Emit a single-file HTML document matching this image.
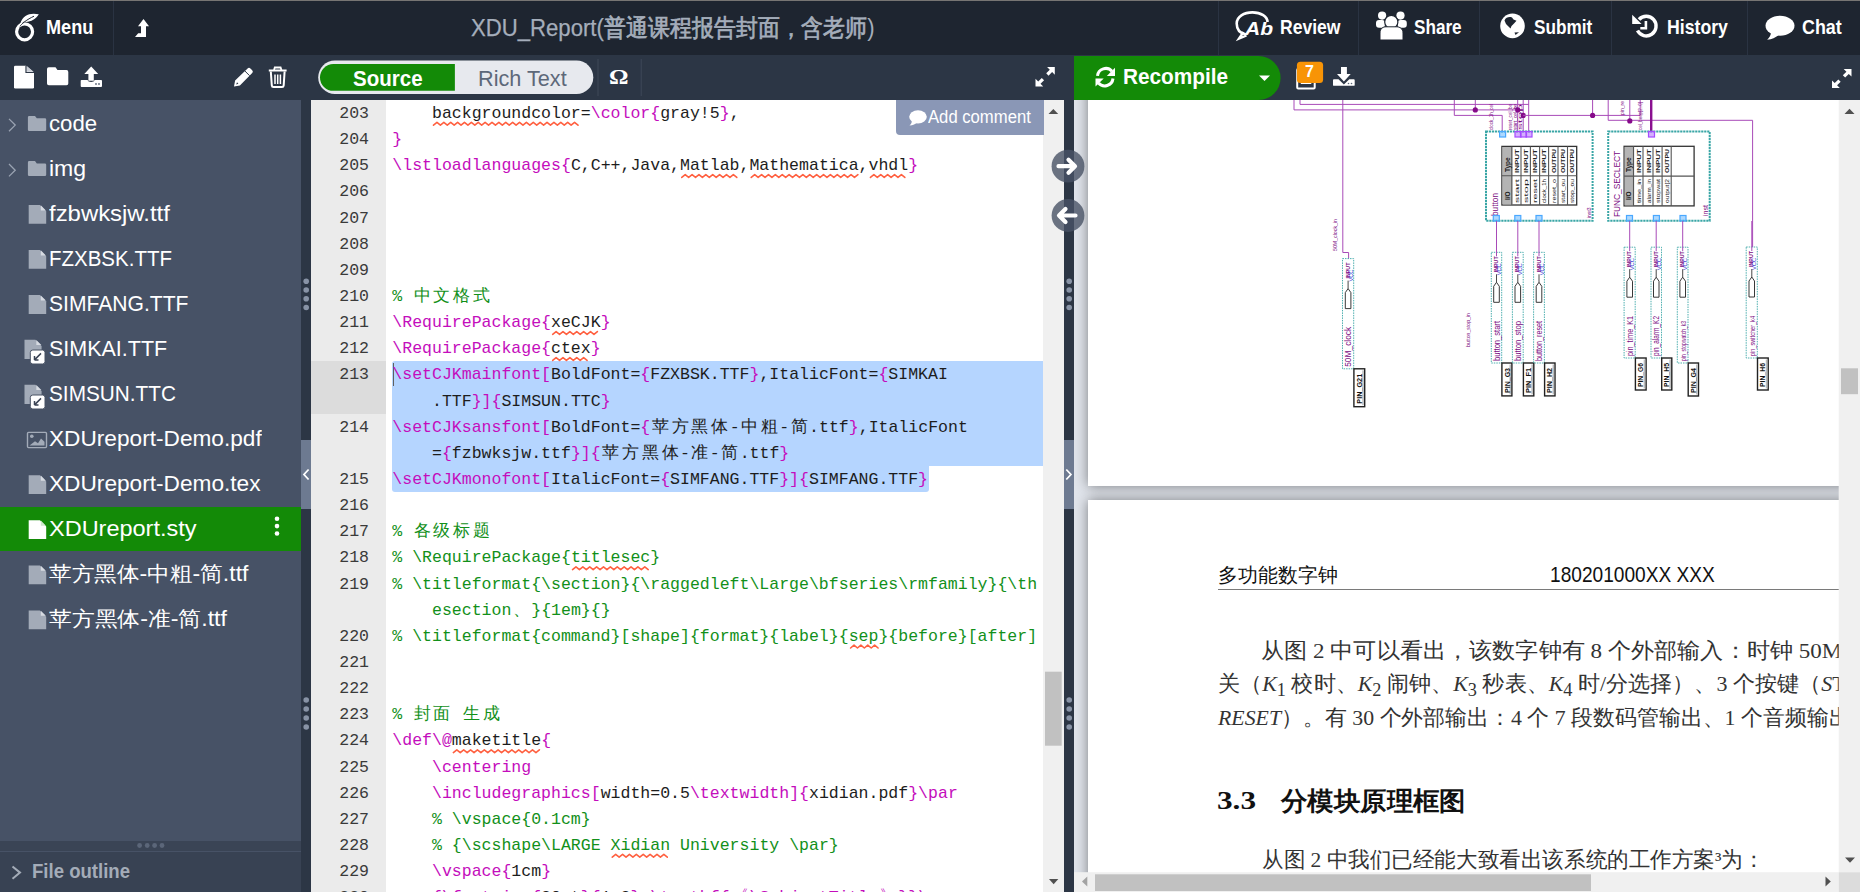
<!DOCTYPE html>
<html><head><meta charset='utf-8'><title>Overleaf</title><style>
*{box-sizing:border-box;margin:0;padding:0}
html,body{width:1860px;height:892px;overflow:hidden;background:#1e2530;font-family:"Liberation Sans",sans-serif}
.a{position:absolute}
.tx{position:absolute;white-space:pre;transform-origin:0 0}
.ov{position:absolute;left:0;top:0}
.cl{position:absolute;left:392.3px;height:26px;white-space:pre;font:16.55px/26px "Liberation Mono",monospace;color:#1d1d1d}
.cl b{font-weight:normal;color:#c40dbc}
.cl em{font-style:normal;color:#12901a}
.cl i{font-style:normal;display:inline-block;width:19.86px;text-align:center;line-height:26px;vertical-align:top}
.gn{position:absolute;left:311px;width:58px;text-align:right;height:26px;font:16.55px/26px "Liberation Mono",monospace;color:#3a3a3a}
</style></head><body>
<div class='a' style='left:0;top:0;width:1860px;height:55px;background:#1e2530;border-top:1px solid #777573'></div>
<div class='a' style='left:113px;top:1px;width:1px;height:54px;background:#2a3342'></div>
<div class='a' style='left:1218px;top:1px;width:1px;height:54px;background:#2a3342'></div>
<div class='a' style='left:1358px;top:1px;width:1px;height:54px;background:#2a3342'></div>
<div class='a' style='left:1479px;top:1px;width:1px;height:54px;background:#2a3342'></div>
<div class='a' style='left:1611px;top:1px;width:1px;height:54px;background:#2a3342'></div>
<div class='a' style='left:1747px;top:1px;width:1px;height:54px;background:#2a3342'></div>
<div class='a' style='left:0;top:55px;width:1860px;height:45px;background:#2c3645'></div>
<div class='a' style='left:0;top:100px;width:301px;height:741px;background:#475266'></div>
<div class='a' style='left:0;top:841px;width:301px;height:10px;background:#3a4455'></div>
<div class='a' style='left:0;top:851px;width:301px;height:41px;background:#384253;border-top:1px solid #475266'></div>
<div class='a' style='left:301px;top:100px;width:10px;height:792px;background:#2c3645'></div>
<div class='a' style='left:301px;top:440px;width:10px;height:69px;background:#6d7a91'></div>
<div class='a' style='left:1064px;top:100px;width:10px;height:792px;background:#2c3645'></div>
<div class='a' style='left:1064px;top:440px;width:10px;height:69px;background:#6d7a91'></div>
<div class='a' style='left:311px;top:100px;width:75px;height:792px;background:#ebebeb'></div>
<div class='a' style='left:386px;top:100px;width:657px;height:792px;background:#fff'></div>
<div class='a' style='left:1043px;top:100px;width:21px;height:792px;background:#f0f0f0'></div>
<div class='a' style='left:1074px;top:100px;width:786px;height:792px;background:#e0e4eb;overflow:hidden'><div class='a' style='left:14px;top:-600px;width:1000px;height:986px;background:#fff;box-shadow:0 0 12px rgba(0,0,0,.45)'></div><div class='a' style='left:14px;top:400px;width:1000px;height:1000px;background:#fff;box-shadow:0 0 12px rgba(0,0,0,.45)'></div></div>
<svg class='ov' width='1860' height='100' viewBox='0 0 1860 100'><circle cx='24.6' cy='31.8' r='8' fill='none' stroke='#fff' stroke-width='3.2'/><path d='M20.8 22.2 C23 15.5 30 12.2 38.8 14.3 C35.5 19.5 30.5 22.4 24.2 21.8 Z' fill='#fff'/><path d='M18.6 28 C21.5 23.5 27 19.5 34 16.2' fill='none' stroke='#1e2530' stroke-width='1'/><path d='M17.6 28.8 C19 25 21 23 22.5 21.5' fill='none' stroke='#fff' stroke-width='1.6'/><path d='M143.5 19 L149 26.2 L146 26.2 L146 37 L135 37 L138.2 33.2 L141 33.2 L141 26.2 L138 26.2 Z' fill='#fff'/><path d='M1246 34.5 C1238 33 1236.7 27 1236.7 23.5 C1236.7 16.5 1244 12.4 1252.5 12.4 C1261 12.4 1267.5 16.5 1267.5 22' fill='none' stroke='#fff' stroke-width='2.6'/><path d='M1243.5 32 L1239 38.6 L1246.5 35.5' fill='none' stroke='#fff' stroke-width='2.4'/><text x='1245' y='35.3' font-family='Liberation Sans' font-weight='bold' font-style='italic' font-size='19' fill='#fff' textLength='28' lengthAdjust='spacingAndGlyphs'>Ab</text><circle cx='1382.1' cy='15.6' r='4.1' fill='#fff'/><circle cx='1400.5' cy='15.6' r='4.1' fill='#fff'/><rect x='1376' y='19.9' width='9' height='7.8' rx='3' fill='#fff'/><rect x='1397.6' y='19.9' width='9.2' height='7.8' rx='3' fill='#fff'/><circle cx='1391.3' cy='21.9' r='6.6' fill='#fff' stroke='#1e2530' stroke-width='1.2'/><path d='M1380 40 L1380 33 C1380 28.5 1383 26.8 1386 26.8 L1396.5 26.8 C1399.5 26.8 1403 28.5 1403 33 L1403 40 Z' fill='#fff' stroke='#1e2530' stroke-width='1'/><circle cx='1512.5' cy='25.9' r='12.3' fill='#fff'/><path d='M1504.5 20.5 C1506 17 1509.5 16.5 1512 17.5 L1513.5 19.5 L1516.5 20.8 L1514 23.5 L1511.5 26 L1510.5 28.5 L1508.5 26.5 L1506 24 Z' fill='#1e2530'/><path d='M1514.5 32.5 L1519 32.3 L1515.5 35 Z' fill='#1e2530'/><path d='M1637.5 30.5 A9.8 9.8 0 1 0 1639 19.5' fill='none' stroke='#fff' stroke-width='3.4'/><path d='M1632.2 14.7 L1632.2 23.9 L1641.6 23.9 Z' fill='#fff'/><path d='M1645.9 21 L1645.9 28.2 L1640.3 28.2' fill='none' stroke='#fff' stroke-width='2.6'/><ellipse cx='1780' cy='25.7' rx='14.5' ry='10' fill='#fff'/><path d='M1771 32 C1771 35 1769.5 37.5 1767.2 39.8 C1772 39.3 1775.5 37.5 1778.5 35.2 Z' fill='#fff'/><path d='M14 67 Q14 65.7 15.3 65.7 L26 65.7 L34 72.5 L34 87.2 Q34 88.5 32.7 88.5 L15.3 88.5 Q14 88.5 14 87.2 Z' fill='#fff'/><path d='M26.8 65.9 L26.8 71.8 L33.6 71.8 Z' fill='#c9cdd5'/><path d='M26 65.7 L26 72.5 L34 72.5' fill='none' stroke='#2c3645' stroke-width='1.2'/><path d='M47 69 Q47 67.2 48.8 67.2 L55.5 67.2 L57.5 70.1 L66.5 70.1 Q68.3 70.1 68.3 71.9 L68.3 83.4 Q68.3 85.2 66.5 85.2 L48.8 85.2 Q47 85.2 47 83.4 Z' fill='#fff'/><path d='M91.2 66.6 L98.2 74 L93.8 74 L93.8 80.8 L88.4 80.8 L88.4 74 L84.3 74 Z' fill='#fff'/><path d='M80.7 80.8 Q80.7 79.9 81.6 79.9 L87.5 79.9 Q88 82 91.1 82 Q94.2 82 94.7 79.9 L101.1 79.9 Q102 79.9 102 80.8 L102 86.1 Q102 87 101.1 87 L81.6 87 Q80.7 87 80.7 86.1 Z' fill='#fff'/><circle cx='96' cy='84' r='0.9' fill='#5d6879'/><circle cx='99' cy='84' r='0.9' fill='#5d6879'/><path d='M234 86.5 L239.9 85.4 L252.2 73.1 Q253.6 71.7 252.2 70.3 L250.4 68.5 Q249 67.1 247.6 68.5 L235.1 80.6 Z' fill='#fff'/><path d='M249.6 75.7 L244.8 70.9' stroke='#2c3645' stroke-width='1'/><path d='M236.2 84.6 L237 82.3 L238.4 83.7 Z' fill='#2c3645'/><path d='M268.8 70.5 L286.6 70.5' stroke='#fff' stroke-width='2'/><path d='M274 70 L274.8 67.5 L280.6 67.5 L281.4 70' fill='none' stroke='#fff' stroke-width='1.8'/><path d='M270.8 71.5 L271.8 85.4 Q271.9 87 273.5 87 L282 87 Q283.6 87 283.7 85.4 L284.6 71.5' fill='none' stroke='#fff' stroke-width='2'/><path d='M275 74.5 L275 84 M277.7 74.5 L277.7 84 M280.4 74.5 L280.4 84' stroke='#fff' stroke-width='1.5'/><rect x='318.2' y='60.6' width='275.1' height='33.4' rx='16.7' fill='#e7e9ee'/><path d='M333.4 64 L454.9 64 L454.9 90.8 L333.4 90.8 A13.4 13.4 0 0 1 333.4 64 Z' fill='#138a07'/><rect x='597.5' y='59' width='1' height='37' fill='#3e4859'/><rect x='640.7' y='59' width='1' height='37' fill='#3e4859'/><text x='609' y='84.2' font-family='Liberation Serif' font-weight='bold' font-size='22' fill='#fff' textLength='19.5' lengthAdjust='spacingAndGlyphs'>Ω</text><g transform='translate(1035.5 67.0) scale(0.965 0.980)'><path d='M12 0 L20 0 L20 8 L17.2 5.2 L13.5 8.9 L11.1 6.5 L14.8 2.8 Z' fill='#fff'/><path d='M8 20 L0 20 L0 12 L2.8 14.8 L6.5 11.1 L8.9 13.5 L5.2 17.2 Z' fill='#fff'/></g><g transform='translate(1832.0 69.0) scale(0.975 0.950)'><path d='M12 0 L20 0 L20 8 L17.2 5.2 L13.5 8.9 L11.1 6.5 L14.8 2.8 Z' fill='#fff'/><path d='M8 20 L0 20 L0 12 L2.8 14.8 L6.5 11.1 L8.9 13.5 L5.2 17.2 Z' fill='#fff'/></g><path d='M1074 56 L1258.6 56 A22 22 0 0 1 1258.6 100 L1074 100 Z' fill='#138a07'/><path d='M1097.5 75.8 A8.3 8.3 0 0 1 1112 71.3' fill='none' stroke='#fff' stroke-width='3'/><path d='M1115 67.8 L1115 76 L1106.8 76 Z' fill='#fff'/><path d='M1113 78.5 A8.3 8.3 0 0 1 1098.5 83' fill='none' stroke='#fff' stroke-width='3'/><path d='M1095.5 86.6 L1095.5 78.4 L1103.7 78.4 Z' fill='#fff'/><path d='M1259 75.5 L1270 75.5 L1264.5 81 Z' fill='#fff'/><rect x='1297.2' y='69' width='17.5' height='19.4' rx='1' fill='none' stroke='#fff' stroke-width='2'/><rect x='1300.8' y='82' width='10.5' height='2' fill='#fff'/><rect x='1296.9' y='61.8' width='26.2' height='21.1' rx='3.5' fill='#f89406'/><text x='1305' y='77' font-family='Liberation Sans' font-weight='bold' font-size='16' fill='#fff'>7</text><path d='M1341 67 L1346.9 67 L1346.9 74 L1350.7 74 L1343.9 81.6 L1337 74 L1341 74 Z' fill='#fff'/><path d='M1333 80.2 Q1333 79.3 1333.9 79.3 L1338.5 79.3 L1343.9 84.5 L1349.3 79.3 L1353.8 79.3 Q1354.7 79.3 1354.7 80.2 L1354.7 84.9 Q1354.7 85.8 1353.8 85.8 L1333.9 85.8 Q1333 85.8 1333 84.9 Z' fill='#fff'/><circle cx='1348.5' cy='83.5' r='0.8' fill='#5d6879'/><circle cx='1351.5' cy='83.5' r='0.8' fill='#5d6879'/></svg>
<span class='tx' style='left:46.41px;top:17.02px;font:bold 20.60px/1 "Liberation Sans",sans-serif;color:#fff;transform:scaleX(0.8790);'>Menu</span>
<span class='tx' style='left:470.97px;top:16.02px;font:normal 24.20px/1 "Liberation Sans",sans-serif;color:#a5aebb;transform:scaleX(0.9150);'><span style='-webkit-text-stroke:0.25px #a5aebb'>XDU_Report(</span><span style='-webkit-text-stroke:0.7px #a5aebb'>普通课程报告封面，含老师</span>)</span>
<span class='tx' style='left:1279.55px;top:18.02px;font:bold 19.70px/1 "Liberation Sans",sans-serif;color:#fff;transform:scaleX(0.8917);'>Review</span>
<span class='tx' style='left:1413.77px;top:18.02px;font:bold 19.70px/1 "Liberation Sans",sans-serif;color:#fff;transform:scaleX(0.8710);'>Share</span>
<span class='tx' style='left:1534.37px;top:18.02px;font:bold 19.70px/1 "Liberation Sans",sans-serif;color:#fff;transform:scaleX(0.8733);'>Submit</span>
<span class='tx' style='left:1666.94px;top:18.02px;font:bold 19.70px/1 "Liberation Sans",sans-serif;color:#fff;transform:scaleX(0.8980);'>History</span>
<span class='tx' style='left:1801.93px;top:18.02px;font:bold 19.70px/1 "Liberation Sans",sans-serif;color:#fff;transform:scaleX(0.9085);'>Chat</span>
<span class='tx' style='left:352.67px;top:68.02px;font:bold 22.30px/1 "Liberation Sans",sans-serif;color:#fff;transform:scaleX(0.9202);'>Source</span>
<span class='tx' style='left:478.40px;top:68.02px;font:normal 22.30px/1 "Liberation Sans",sans-serif;color:#5d6879;transform:scaleX(0.9716);'>Rich Text</span>
<span class='tx' style='left:1123.05px;top:66.02px;font:bold 22.50px/1 "Liberation Sans",sans-serif;color:#fff;transform:scaleX(0.9235);'>Recompile</span>
<span class='tx' style='left:48.67px;top:114.02px;font:normal 21.40px/1 "Liberation Sans",sans-serif;color:#fff;transform:scaleX(1.0383);'>code</span>
<span class='tx' style='left:48.62px;top:159.02px;font:normal 21.40px/1 "Liberation Sans",sans-serif;color:#fff;transform:scaleX(1.0783);'>img</span>
<span class='tx' style='left:48.57px;top:204.02px;font:normal 21.40px/1 "Liberation Sans",sans-serif;color:#fff;transform:scaleX(1.1174);'>fzbwksjw.ttf</span>
<span class='tx' style='left:48.77px;top:249.02px;font:normal 21.40px/1 "Liberation Sans",sans-serif;color:#fff;transform:scaleX(0.9579);'>FZXBSK.TTF</span>
<span class='tx' style='left:48.73px;top:294.02px;font:normal 21.40px/1 "Liberation Sans",sans-serif;color:#fff;transform:scaleX(0.9866);'>SIMFANG.TTF</span>
<span class='tx' style='left:48.71px;top:339.02px;font:normal 21.40px/1 "Liberation Sans",sans-serif;color:#fff;transform:scaleX(1.0044);'>SIMKAI.TTF</span>
<span class='tx' style='left:48.75px;top:384.02px;font:normal 21.40px/1 "Liberation Sans",sans-serif;color:#fff;transform:scaleX(0.9715);'>SIMSUN.TTC</span>
<span class='tx' style='left:48.64px;top:429.02px;font:normal 21.40px/1 "Liberation Sans",sans-serif;color:#fff;transform:scaleX(1.0588);'>XDUreport-Demo.pdf</span>
<span class='tx' style='left:48.64px;top:474.02px;font:normal 21.40px/1 "Liberation Sans",sans-serif;color:#fff;transform:scaleX(1.0592);'>XDUreport-Demo.tex</span>
<div class='a' style='left:0;top:506.80px;width:301px;height:44px;background:#138a07'></div>
<span class='tx' style='left:48.59px;top:519.02px;font:normal 21.40px/1 "Liberation Sans",sans-serif;color:#fff;transform:scaleX(1.0982);'>XDUreport.sty</span>
<span class='tx' style='left:48.62px;top:564.02px;font:normal 21.40px/1 "Liberation Sans",sans-serif;color:#fff;transform:scaleX(1.0780);'>苹方黑体-中粗-简.ttf</span>
<span class='tx' style='left:48.61px;top:609.02px;font:normal 21.40px/1 "Liberation Sans",sans-serif;color:#fff;transform:scaleX(1.0851);'>苹方黑体-准-简.ttf</span>
<svg class='ov' width='1860' height='892'><path d='M9 118.9 L15.2 125.1 L9 131.3' fill='none' stroke='#9aa3b2' stroke-width='1.3'/><path d='M27.9 117.3 Q27.9 116.0 29.2 116.0 L35 116.0 L36.8 118.3 L44.9 118.3 Q46.2 118.3 46.2 119.6 L46.2 129.8 Q46.2 131.0 44.9 131.0 L29.2 131.0 Q27.9 131.0 27.9 129.8 Z' fill='#a3abb8'/><path d='M9 164.0 L15.2 170.2 L9 176.4' fill='none' stroke='#9aa3b2' stroke-width='1.3'/><path d='M27.9 162.4 Q27.9 161.0 29.2 161.0 L35 161.0 L36.8 163.4 L44.9 163.4 Q46.2 163.4 46.2 164.7 L46.2 174.8 Q46.2 176.0 44.9 176.0 L29.2 176.0 Q27.9 176.0 27.9 174.8 Z' fill='#a3abb8'/><path d='M28.7 205.0 L39.9 205.0 L46.2 211.3 L46.2 223.8 L28.7 223.8 Z' fill='#a3abb8'/><path d='M40.8 205.3 L45.9 210.4 L40.8 210.4 Z' fill='#d6dae1'/><path d='M28.7 250.0 L39.9 250.0 L46.2 256.3 L46.2 268.8 L28.7 268.8 Z' fill='#a3abb8'/><path d='M40.8 250.3 L45.9 255.4 L40.8 255.4 Z' fill='#d6dae1'/><path d='M28.7 295.1 L39.9 295.1 L46.2 301.4 L46.2 313.9 L28.7 313.9 Z' fill='#a3abb8'/><path d='M40.8 295.4 L45.9 300.5 L40.8 300.5 Z' fill='#d6dae1'/><path d='M24.5 339.7 L35.4 339.7 L41.6 345.9 L41.6 359.0 L24.5 359.0 Z' fill='#a3abb8'/><path d='M36.3 340.0 L41.3 345.0 L36.3 345.0 Z' fill='#d6dae1'/><rect x='30.3' y='350.0' width='14.7' height='14' rx='2.5' fill='#fff' stroke='#495365' stroke-width='1'/><path d='M41 353.4 L34.5 359.9 M34.5 359.9 L34.5 355.9 M34.5 359.9 L38.5 359.9' fill='none' stroke='#3b4455' stroke-width='1.5'/><path d='M24.5 384.8 L35.4 384.8 L41.6 390.9 L41.6 404.0 L24.5 404.0 Z' fill='#a3abb8'/><path d='M36.3 385.1 L41.3 390.0 L36.3 390.0 Z' fill='#d6dae1'/><rect x='30.3' y='395.0' width='14.7' height='14' rx='2.5' fill='#fff' stroke='#495365' stroke-width='1'/><path d='M41 398.4 L34.5 404.9 M34.5 404.9 L34.5 400.9 M34.5 404.9 L38.5 404.9' fill='none' stroke='#3b4455' stroke-width='1.5'/><rect x='27.5' y='432.4' width='19' height='15.2' rx='1' fill='none' stroke='#a3abb8' stroke-width='1.4'/><circle cx='31.8' cy='436.3' r='1.8' fill='#a3abb8'/><path d='M29.5 445.5 L35 441.2 L38 443.2 L41 438.5 L44.5 441.7 L44.5 445.5 L29.5 445.5 Z' fill='#a3abb8'/><path d='M28.7 475.3 L39.9 475.3 L46.2 481.6 L46.2 494.1 L28.7 494.1 Z' fill='#a3abb8'/><path d='M40.8 475.6 L45.9 480.7 L40.8 480.7 Z' fill='#d6dae1'/><path d='M28.7 520.3 L39.9 520.3 L46.2 526.6 L46.2 539.1 L28.7 539.1 Z' fill='#fff'/><path d='M40.8 520.6 L45.9 525.7 L40.8 525.7 Z' fill='#cfe8cc'/><circle cx='277' cy='518.7' r='2.3' fill='#fff'/><circle cx='277' cy='526.1' r='2.3' fill='#fff'/><circle cx='277' cy='533.5' r='2.3' fill='#fff'/><path d='M28.7 565.4 L39.9 565.4 L46.2 571.7 L46.2 584.2 L28.7 584.2 Z' fill='#a3abb8'/><path d='M40.8 565.7 L45.9 570.8 L40.8 570.8 Z' fill='#d6dae1'/><path d='M28.7 610.4 L39.9 610.4 L46.2 616.7 L46.2 629.2 L28.7 629.2 Z' fill='#a3abb8'/><path d='M40.8 610.7 L45.9 615.8 L40.8 615.8 Z' fill='#d6dae1'/><circle cx='139.6' cy='845.5' r='2.4' fill='#5b6679'/><circle cx='147.2' cy='845.5' r='2.4' fill='#5b6679'/><circle cx='154.6' cy='845.5' r='2.4' fill='#5b6679'/><circle cx='162.0' cy='845.5' r='2.4' fill='#5b6679'/><path d='M12.5 866.5 L20 872.6 L12.5 878.7' fill='none' stroke='#a4acb8' stroke-width='2'/><circle cx='306.2' cy='281.3' r='2.8' fill='#8893a6'/><circle cx='306.2' cy='290.0' r='2.8' fill='#8893a6'/><circle cx='306.2' cy='298.8' r='2.8' fill='#8893a6'/><circle cx='306.2' cy='307.5' r='2.8' fill='#8893a6'/><circle cx='306.2' cy='700.0' r='2.8' fill='#8893a6'/><circle cx='306.2' cy='709.0' r='2.8' fill='#8893a6'/><circle cx='306.2' cy='718.0' r='2.8' fill='#8893a6'/><circle cx='306.2' cy='727.0' r='2.8' fill='#8893a6'/><circle cx='1069.2' cy='281.3' r='2.8' fill='#8893a6'/><circle cx='1069.2' cy='290.0' r='2.8' fill='#8893a6'/><circle cx='1069.2' cy='298.8' r='2.8' fill='#8893a6'/><circle cx='1069.2' cy='307.5' r='2.8' fill='#8893a6'/><circle cx='1069.2' cy='700.0' r='2.8' fill='#8893a6'/><circle cx='1069.2' cy='709.0' r='2.8' fill='#8893a6'/><circle cx='1069.2' cy='718.0' r='2.8' fill='#8893a6'/><circle cx='1069.2' cy='727.0' r='2.8' fill='#8893a6'/><path d='M308.6 469.5 L304 474.5 L308.6 479.5' fill='none' stroke='#fff' stroke-width='1.8'/><path d='M1066.3 469.5 L1070.9 474.5 L1066.3 479.5' fill='none' stroke='#fff' stroke-width='1.8'/></svg>
<span class='tx' style='left:32.09px;top:861.02px;font:bold 20.00px/1 "Liberation Sans",sans-serif;color:#a4acb8;transform:scaleX(0.9286);'>File outline</span>
<div class='a' style='left:311px;top:361.4px;width:75px;height:52.28px;background:#dcdcdc'></div>
<div class='a' style='left:392px;top:361.4px;width:651px;height:104.56px;background:#b5d5ff;border-radius:3px 0 0 0'></div>
<div class='a' style='left:392px;top:466.0px;width:537px;height:26.14px;background:#b5d5ff;border-radius:0 0 3px 3px'></div>
<div class='a' style='left:392.5px;top:362.9px;width:1.2px;height:23px;background:#606060'></div>
<div class='gn' style='top:101.00px'>203</div>
<div class='gn' style='top:127.14px'>204</div>
<div class='gn' style='top:153.28px'>205</div>
<div class='gn' style='top:179.42px'>206</div>
<div class='gn' style='top:205.56px'>207</div>
<div class='gn' style='top:231.70px'>208</div>
<div class='gn' style='top:257.84px'>209</div>
<div class='gn' style='top:283.98px'>210</div>
<div class='gn' style='top:310.12px'>211</div>
<div class='gn' style='top:336.26px'>212</div>
<div class='gn' style='top:362.40px'>213</div>
<div class='gn' style='top:414.68px'>214</div>
<div class='gn' style='top:466.96px'>215</div>
<div class='gn' style='top:493.10px'>216</div>
<div class='gn' style='top:519.24px'>217</div>
<div class='gn' style='top:545.38px'>218</div>
<div class='gn' style='top:571.52px'>219</div>
<div class='gn' style='top:623.80px'>220</div>
<div class='gn' style='top:649.94px'>221</div>
<div class='gn' style='top:676.08px'>222</div>
<div class='gn' style='top:702.22px'>223</div>
<div class='gn' style='top:728.36px'>224</div>
<div class='gn' style='top:754.50px'>225</div>
<div class='gn' style='top:780.64px'>226</div>
<div class='gn' style='top:806.78px'>227</div>
<div class='gn' style='top:832.92px'>228</div>
<div class='gn' style='top:859.06px'>229</div>
<div class='gn' style='top:885.20px'>230</div>
<div class='cl' style='top:101.00px'>    backgroundcolor=<b>\color{</b>gray!5<b>}</b>,</div>
<div class='cl' style='top:127.14px'><b>}</b></div>
<div class='cl' style='top:153.28px'><b>\lstloadlanguages{</b>C,C++,Java,Matlab,Mathematica,vhdl<b>}</b></div>
<div class='cl' style='top:283.98px'><em>% <i>中</i><i>文</i><i>格</i><i>式</i></em></div>
<div class='cl' style='top:310.12px'><b>\RequirePackage{</b>xeCJK<b>}</b></div>
<div class='cl' style='top:336.26px'><b>\RequirePackage{</b>ctex<b>}</b></div>
<div class='cl' style='top:362.40px'><b>\setCJKmainfont[</b>BoldFont=<b>{</b>FZXBSK.TTF<b>}</b>,ItalicFont=<b>{</b>SIMKAI</div>
<div class='cl' style='top:388.54px'>    .TTF<b>}]{</b>SIMSUN.TTC<b>}</b></div>
<div class='cl' style='top:414.68px'><b>\setCJKsansfont[</b>BoldFont=<b>{</b><i>苹</i><i>方</i><i>黑</i><i>体</i>-<i>中</i><i>粗</i>-<i>简</i>.ttf<b>}</b>,ItalicFont</div>
<div class='cl' style='top:440.82px'>    =<b>{</b>fzbwksjw.ttf<b>}]{</b><i>苹</i><i>方</i><i>黑</i><i>体</i>-<i>准</i>-<i>简</i>.ttf<b>}</b></div>
<div class='cl' style='top:466.96px'><b>\setCJKmonofont[</b>ItalicFont=<b>{</b>SIMFANG.TTF<b>}]{</b>SIMFANG.TTF<b>}</b></div>
<div class='cl' style='top:519.24px'><em>% <i>各</i><i>级</i><i>标</i><i>题</i></em></div>
<div class='cl' style='top:545.38px'><em>% \RequirePackage{</em><em>titlesec</em><em>}</em></div>
<div class='cl' style='top:571.52px'><em>% \titleformat{\section}{\raggedleft\Large\bfseries\rmfamily}{\th</em></div>
<div class='cl' style='top:597.66px'>    <em>esection<i>、</i>}{1em}{}</em></div>
<div class='cl' style='top:623.80px'><em>% \titleformat{command}[shape]{format}{label}{</em><em>sep</em><em>}{before}[after]</em></div>
<div class='cl' style='top:702.22px'><em>% <i>封</i><i>面</i> <i>生</i><i>成</i></em></div>
<div class='cl' style='top:728.36px'><b>\def\@</b>maketitle<b>{</b></div>
<div class='cl' style='top:754.50px'>    <b>\centering</b></div>
<div class='cl' style='top:780.64px'>    <b>\includegraphics[</b>width=0.5<b>\textwidth]{</b>xidian.pdf<b>}\par</b></div>
<div class='cl' style='top:806.78px'>    <em>% \vspace{0.1cm}</em></div>
<div class='cl' style='top:832.92px'>    <em>% {\scshape\LARGE </em><em>Xidian</em><em> University \par}</em></div>
<div class='cl' style='top:859.06px'>    <b>\vspace{</b>1cm<b>}</b></div>
<div class='cl' style='top:885.20px'>    <b>{\fontsize{</b>30pt<b>}{</b>1.2<b>} \textbf{<i>《</i>\SubjectTitle<i>》</i>}}\par</b></div>
<svg class='ov' width='1860' height='892'><path d='M433.52 125.20 L436.96 122.40 L440.40 125.20 L443.84 122.40 L447.28 125.20 L450.72 122.40 L454.16 125.20 L457.60 122.40 L461.04 125.20 L464.48 122.40 L467.92 125.20 L471.36 122.40 L474.80 125.20 L478.24 122.40 L481.68 125.20 L485.12 122.40 L488.56 125.20 L492.00 122.40 L495.44 125.20 L498.88 122.40 L502.32 125.20 L505.76 122.40 L509.20 125.20 L512.64 122.40 L516.08 125.20 L519.52 122.40 L522.96 125.20 L526.40 122.40 L529.84 125.20 L533.28 122.40 L536.72 125.20 L540.16 122.40 L543.60 125.20 L547.04 122.40 L550.48 125.20 L553.92 122.40 L557.36 125.20 L560.80 122.40 L564.24 125.20 L567.68 122.40 L571.12 125.20 L574.56 122.40 L578.00 125.20' fill='none' stroke='#ff6040' stroke-width='1.6' stroke-linejoin='round' stroke-linecap='round'/><path d='M681.77 177.48 L685.21 174.68 L688.65 177.48 L692.09 174.68 L695.53 177.48 L698.97 174.68 L702.41 177.48 L705.85 174.68 L709.29 177.48 L712.73 174.68 L716.17 177.48 L719.61 174.68 L723.05 177.48 L726.49 174.68 L729.93 177.48 L733.37 174.68 L736.81 177.48' fill='none' stroke='#ff6040' stroke-width='1.6' stroke-linejoin='round' stroke-linecap='round'/><path d='M751.28 177.48 L754.72 174.68 L758.16 177.48 L761.60 174.68 L765.04 177.48 L768.48 174.68 L771.92 177.48 L775.36 174.68 L778.80 177.48 L782.24 174.68 L785.68 177.48 L789.12 174.68 L792.56 177.48 L796.00 174.68 L799.44 177.48 L802.88 174.68 L806.32 177.48 L809.76 174.68 L813.20 177.48 L816.64 174.68 L820.08 177.48 L823.52 174.68 L826.96 177.48 L830.40 174.68 L833.84 177.48 L837.28 174.68 L840.72 177.48 L844.16 174.68 L847.60 177.48 L851.04 174.68 L854.48 177.48 L857.92 174.68' fill='none' stroke='#ff6040' stroke-width='1.6' stroke-linejoin='round' stroke-linecap='round'/><path d='M870.44 177.48 L873.88 174.68 L877.32 177.48 L880.76 174.68 L884.20 177.48 L887.64 174.68 L891.08 177.48 L894.52 174.68 L897.96 177.48 L901.40 174.68 L904.84 177.48' fill='none' stroke='#ff6040' stroke-width='1.6' stroke-linejoin='round' stroke-linecap='round'/><path d='M552.68 334.32 L556.12 331.52 L559.56 334.32 L563.00 331.52 L566.44 334.32 L569.88 331.52 L573.32 334.32 L576.76 331.52 L580.20 334.32 L583.64 331.52 L587.08 334.32 L590.52 331.52 L593.96 334.32 L597.40 331.52' fill='none' stroke='#ff6040' stroke-width='1.6' stroke-linejoin='round' stroke-linecap='round'/><path d='M552.68 360.46 L556.12 357.66 L559.56 360.46 L563.00 357.66 L566.44 360.46 L569.88 357.66 L573.32 360.46 L576.76 357.66 L580.20 360.46 L583.64 357.66 L587.08 360.46' fill='none' stroke='#ff6040' stroke-width='1.6' stroke-linejoin='round' stroke-linecap='round'/><path d='M572.54 569.58 L575.98 566.78 L579.42 569.58 L582.86 566.78 L586.30 569.58 L589.74 566.78 L593.18 569.58 L596.62 566.78 L600.06 569.58 L603.50 566.78 L606.94 569.58 L610.38 566.78 L613.82 569.58 L617.26 566.78 L620.70 569.58 L624.14 566.78 L627.58 569.58 L631.02 566.78 L634.46 569.58 L637.90 566.78 L641.34 569.58 L644.78 566.78 L648.22 569.58' fill='none' stroke='#ff6040' stroke-width='1.6' stroke-linejoin='round' stroke-linecap='round'/><path d='M850.58 648.00 L854.02 645.20 L857.46 648.00 L860.90 645.20 L864.34 648.00 L867.78 645.20 L871.22 648.00 L874.66 645.20 L878.10 648.00' fill='none' stroke='#ff6040' stroke-width='1.6' stroke-linejoin='round' stroke-linecap='round'/><path d='M453.38 752.56 L456.82 749.76 L460.26 752.56 L463.70 749.76 L467.14 752.56 L470.58 749.76 L474.02 752.56 L477.46 749.76 L480.90 752.56 L484.34 749.76 L487.78 752.56 L491.22 749.76 L494.66 752.56 L498.10 749.76 L501.54 752.56 L504.98 749.76 L508.42 752.56 L511.86 749.76 L515.30 752.56 L518.74 749.76 L522.18 752.56 L525.62 749.76 L529.06 752.56 L532.50 749.76 L535.94 752.56 L539.38 749.76' fill='none' stroke='#ff6040' stroke-width='1.6' stroke-linejoin='round' stroke-linecap='round'/><path d='M612.26 857.12 L615.70 854.32 L619.14 857.12 L622.58 854.32 L626.02 857.12 L629.46 854.32 L632.90 857.12 L636.34 854.32 L639.78 857.12 L643.22 854.32 L646.66 857.12 L650.10 854.32 L653.54 857.12 L656.98 854.32 L660.42 857.12 L663.86 854.32 L667.30 857.12' fill='none' stroke='#ff6040' stroke-width='1.6' stroke-linejoin='round' stroke-linecap='round'/></svg>
<div class='a' style='left:896px;top:100px;width:148px;height:35px;background:#8a97b6;border-radius:0 0 0 4px'></div>
<svg class='ov' width='1860' height='892'><ellipse cx='918' cy='116.8' rx='8.8' ry='6.6' fill='#fff'/><path d='M912 120 C912 122.5 911 124 909.5 125.6 C913 125.3 915.5 124 917.5 122.5 Z' fill='#fff'/><path d='M1048.5 114 L1058.2 114 L1053.35 108.9 Z' fill='#505050'/><path d='M1049 879 L1058.3 879 L1053.65 884.3 Z' fill='#505050'/><rect x='1045' y='671.7' width='16.7' height='74' fill='#c1c1c1'/><circle cx='1068' cy='166.2' r='16.4' fill='rgba(73,83,101,0.8)'/><path d='M1058.5 166.2 L1074 166.2 M1068.5 159.7 L1075 166.2 L1068.5 172.7' fill='none' stroke='#fff' stroke-width='4.2' stroke-linecap='round' stroke-linejoin='round'/><circle cx='1068' cy='215.5' r='16.4' fill='rgba(73,83,101,0.8)'/><path d='M1075.5 215.5 L1060 215.5 M1065.5 209.0 L1059 215.5 L1065.5 222.0' fill='none' stroke='#fff' stroke-width='4.2' stroke-linecap='round' stroke-linejoin='round'/></svg>
<span class='tx' style='left:928.20px;top:109.02px;font:normal 17.50px/1 "Liberation Sans",sans-serif;color:#fff;transform:scaleX(0.9521);'>Add comment</span>
<svg class='ov' width='1860' height='892' style='clip-path:inset(100px 22px 406px 1088px)'><path d='M1300.0 100.0 L1300.0 104.4' stroke='#a84ab8' stroke-width='1.0'/><path d='M1300.0 104.4 L1528.7 104.4' stroke='#a84ab8' stroke-width='1.0'/><path d='M1294.0 100.0 L1294.0 109.9' stroke='#a84ab8' stroke-width='1.0'/><path d='M1294.0 109.9 L1523.2 109.9' stroke='#a84ab8' stroke-width='1.0'/><path d='M1342.8 100.0 L1342.8 252.5' stroke='#a84ab8' stroke-width='1.0'/><path d='M1342.8 252.5 L1348.6 252.5' stroke='#a84ab8' stroke-width='1.0'/><path d='M1348.6 252.5 L1348.6 258.6' stroke='#a84ab8' stroke-width='1.0'/><path d='M1454.3 100.0 L1454.3 115.4' stroke='#a84ab8' stroke-width='1.0'/><path d='M1454.3 115.4 L1502.2 115.4' stroke='#a84ab8' stroke-width='1.0'/><path d='M1502.2 115.4 L1502.2 131.5' stroke='#a84ab8' stroke-width='1.0'/><path d='M1475.3 100.0 L1475.3 109.9' stroke='#a84ab8' stroke-width='1.0'/><circle cx='1475.3' cy='109.9' r='2.6' fill='#860a8a'/><path d='M1517.7 100.0 L1517.7 131.5' stroke='#a84ab8' stroke-width='1.0'/><circle cx='1517.7' cy='109.9' r='2.6' fill='#860a8a'/><path d='M1523.2 100.0 L1523.2 131.5' stroke='#a84ab8' stroke-width='1.0'/><circle cx='1523.2' cy='115.4' r='2.6' fill='#860a8a'/><path d='M1528.7 100.0 L1528.7 131.5' stroke='#a84ab8' stroke-width='1.0'/><path d='M1523.2 115.4 L1640.2 115.4' stroke='#a84ab8' stroke-width='1.0'/><path d='M1592.6 100.0 L1592.6 115.4' stroke='#a84ab8' stroke-width='1.0'/><circle cx='1592.6' cy='115.4' r='2.6' fill='#860a8a'/><path d='M1640.2 100.0 L1640.2 115.4' stroke='#a84ab8' stroke-width='1.0'/><path d='M1608.2 100.0 L1608.2 120.3' stroke='#a84ab8' stroke-width='1.0'/><path d='M1608.2 120.3 L1752.6 120.3' stroke='#a84ab8' stroke-width='1.0'/><path d='M1752.6 120.3 L1752.6 247.0' stroke='#a84ab8' stroke-width='1.0'/><path d='M1629.8 100.0 L1629.8 120.3' stroke='#a84ab8' stroke-width='1.0'/><circle cx='1629.8' cy='120.9' r='2.6' fill='#860a8a'/><path d='M1651.2 100.0 L1651.2 131.5' stroke='#8a1090' stroke-width='2.4'/><rect x='1486.0' y='131.5' width='106.6' height='89.3' fill='none' stroke='#3aa6a6' stroke-width='2' stroke-dasharray='2.2 0.8'/><rect x='1608.2' y='131.5' width='101.5' height='89.3' fill='none' stroke='#3aa6a6' stroke-width='2' stroke-dasharray='2.2 0.8'/><rect x='1501.9' y='146.4' width='74.8' height='58.6' fill='#fff' stroke='#333' stroke-width='1.3'/><rect x='1502.5' y='147.0' width='9.9' height='57.4' fill='#b4b4b4'/><path d='M1501.9 175.7 L1576.7 175.7' stroke='#555' stroke-width='1.1'/><path d='M1511.8 146.4 L1511.8 205.0' stroke='#555' stroke-width='1.1'/><path d='M1521.0 146.4 L1521.0 205.0' stroke='#555' stroke-width='1.1'/><path d='M1530.4 146.4 L1530.4 205.0' stroke='#555' stroke-width='1.1'/><path d='M1539.6 146.4 L1539.6 205.0' stroke='#555' stroke-width='1.1'/><path d='M1548.6 146.4 L1548.6 205.0' stroke='#555' stroke-width='1.1'/><path d='M1558.0 146.4 L1558.0 205.0' stroke='#555' stroke-width='1.1'/><path d='M1567.5 146.4 L1567.5 205.0' stroke='#555' stroke-width='1.1'/><rect x='1624.1' y='146.3' width='70.0' height='59.6' fill='#fff' stroke='#333' stroke-width='1.3'/><rect x='1624.7' y='146.9' width='9.4' height='58.4' fill='#b4b4b4'/><path d='M1624.1 176.1 L1694.1 176.1' stroke='#555' stroke-width='1.1'/><path d='M1633.5 146.3 L1633.5 205.9' stroke='#555' stroke-width='1.1'/><path d='M1643.0 146.3 L1643.0 205.9' stroke='#555' stroke-width='1.1'/><path d='M1653.0 146.3 L1653.0 205.9' stroke='#555' stroke-width='1.1'/><path d='M1662.1 146.3 L1662.1 205.9' stroke='#555' stroke-width='1.1'/><path d='M1671.2 146.3 L1671.2 205.9' stroke='#555' stroke-width='1.1'/><text transform='translate(1518.7 173.0) rotate(-90)' font-family='Liberation Sans' font-size='5.5' font-weight='bold' fill='#222' textLength='24.0' lengthAdjust='spacingAndGlyphs'>INPUT</text><text transform='translate(1528.1 173.0) rotate(-90)' font-family='Liberation Sans' font-size='5.5' font-weight='bold' fill='#222' textLength='24.0' lengthAdjust='spacingAndGlyphs'>INPUT</text><text transform='translate(1537.3 173.0) rotate(-90)' font-family='Liberation Sans' font-size='5.5' font-weight='bold' fill='#222' textLength='24.0' lengthAdjust='spacingAndGlyphs'>INPUT</text><text transform='translate(1546.3 173.0) rotate(-90)' font-family='Liberation Sans' font-size='5.5' font-weight='bold' fill='#222' textLength='24.0' lengthAdjust='spacingAndGlyphs'>INPUT</text><text transform='translate(1555.7 173.0) rotate(-90)' font-family='Liberation Sans' font-size='5.5' font-weight='bold' fill='#222' textLength='24.0' lengthAdjust='spacingAndGlyphs'>OUTPU</text><text transform='translate(1565.2 173.0) rotate(-90)' font-family='Liberation Sans' font-size='5.5' font-weight='bold' fill='#222' textLength='24.0' lengthAdjust='spacingAndGlyphs'>OUTPU</text><text transform='translate(1574.4 173.0) rotate(-90)' font-family='Liberation Sans' font-size='5.5' font-weight='bold' fill='#222' textLength='24.0' lengthAdjust='spacingAndGlyphs'>OUTPU</text><text transform='translate(1518.7 203.0) rotate(-90)' font-family='Liberation Sans' font-size='5.8' font-weight='normal' fill='#222' textLength='24.0' lengthAdjust='spacingAndGlyphs'>start</text><text transform='translate(1528.1 203.0) rotate(-90)' font-family='Liberation Sans' font-size='5.8' font-weight='normal' fill='#222' textLength='24.0' lengthAdjust='spacingAndGlyphs'>stop</text><text transform='translate(1537.3 203.0) rotate(-90)' font-family='Liberation Sans' font-size='5.8' font-weight='normal' fill='#222' textLength='24.0' lengthAdjust='spacingAndGlyphs'>reset</text><text transform='translate(1546.3 203.0) rotate(-90)' font-family='Liberation Sans' font-size='5.8' font-weight='normal' fill='#222' textLength='24.0' lengthAdjust='spacingAndGlyphs'>clock_1h</text><text transform='translate(1555.7 203.0) rotate(-90)' font-family='Liberation Sans' font-size='5.8' font-weight='normal' fill='#222' textLength='24.0' lengthAdjust='spacingAndGlyphs'>reset_o</text><text transform='translate(1565.2 203.0) rotate(-90)' font-family='Liberation Sans' font-size='5.8' font-weight='normal' fill='#222' textLength='24.0' lengthAdjust='spacingAndGlyphs'>start_ou</text><text transform='translate(1574.4 203.0) rotate(-90)' font-family='Liberation Sans' font-size='5.8' font-weight='normal' fill='#222' textLength='24.0' lengthAdjust='spacingAndGlyphs'>stop_ou</text><text transform='translate(1509.5 172.0) rotate(-90)' font-family='Liberation Sans' font-size='6.5' font-weight='bold' fill='#222'>Type</text><text transform='translate(1509.5 200.0) rotate(-90)' font-family='Liberation Sans' font-size='6.5' font-weight='bold' fill='#222'>I/O</text><text transform='translate(1640.7 173.0) rotate(-90)' font-family='Liberation Sans' font-size='5.5' font-weight='bold' fill='#222' textLength='24.0' lengthAdjust='spacingAndGlyphs'>INPUT</text><text transform='translate(1650.7 173.0) rotate(-90)' font-family='Liberation Sans' font-size='5.5' font-weight='bold' fill='#222' textLength='24.0' lengthAdjust='spacingAndGlyphs'>INPUT</text><text transform='translate(1659.8 173.0) rotate(-90)' font-family='Liberation Sans' font-size='5.5' font-weight='bold' fill='#222' textLength='24.0' lengthAdjust='spacingAndGlyphs'>INPUT</text><text transform='translate(1668.9 173.0) rotate(-90)' font-family='Liberation Sans' font-size='5.5' font-weight='bold' fill='#222' textLength='24.0' lengthAdjust='spacingAndGlyphs'>OUTPU</text><text transform='translate(1640.7 203.0) rotate(-90)' font-family='Liberation Sans' font-size='5.8' font-weight='normal' fill='#222' textLength='24.0' lengthAdjust='spacingAndGlyphs'>time_in</text><text transform='translate(1650.7 203.0) rotate(-90)' font-family='Liberation Sans' font-size='5.8' font-weight='normal' fill='#222' textLength='24.0' lengthAdjust='spacingAndGlyphs'>alarm_in</text><text transform='translate(1659.8 203.0) rotate(-90)' font-family='Liberation Sans' font-size='5.8' font-weight='normal' fill='#222' textLength='24.0' lengthAdjust='spacingAndGlyphs'>stopwat</text><text transform='translate(1668.9 203.0) rotate(-90)' font-family='Liberation Sans' font-size='5.8' font-weight='normal' fill='#222' textLength='24.0' lengthAdjust='spacingAndGlyphs'>output[2</text><text transform='translate(1631.0 172.0) rotate(-90)' font-family='Liberation Sans' font-size='6.5' font-weight='bold' fill='#222'>Type</text><text transform='translate(1631.0 200.0) rotate(-90)' font-family='Liberation Sans' font-size='6.5' font-weight='bold' fill='#222'>I/O</text><text transform='translate(1497.5 216.0) rotate(-90)' font-family='Liberation Sans' font-size='9.0' font-weight='normal' fill='#7a0a82' textLength='23.0' lengthAdjust='spacingAndGlyphs'>button</text><text transform='translate(1619.5 217.0) rotate(-90)' font-family='Liberation Sans' font-size='9.5' font-weight='normal' fill='#7a0a82' textLength='66.0' lengthAdjust='spacingAndGlyphs'>FUNC_SECLECT</text><text transform='translate(1591.0 218.0) rotate(-90)' font-family='Liberation Sans' font-size='5.0' font-weight='normal' fill='#7a0a82'>inst3</text><text transform='translate(1708.0 216.0) rotate(-90)' font-family='Liberation Sans' font-size='7.0' font-weight='normal' fill='#7a0a82'>inst</text><rect x='1499.6' y='131.5' width='6' height='5.5' fill='#4aa8ff' fill-opacity='0.45' stroke='#4aa8ff' stroke-width='1.2'/><rect x='1515.0' y='131.5' width='6' height='5.5' fill='#a44cff' fill-opacity='0.45' stroke='#a44cff' stroke-width='1.2'/><rect x='1520.5' y='131.5' width='6' height='5.5' fill='#a44cff' fill-opacity='0.45' stroke='#a44cff' stroke-width='1.2'/><rect x='1526.0' y='131.5' width='6' height='5.5' fill='#a44cff' fill-opacity='0.45' stroke='#a44cff' stroke-width='1.2'/><rect x='1648.5' y='131.5' width='6' height='5.5' fill='#a44cff' fill-opacity='0.45' stroke='#a44cff' stroke-width='1.2'/><rect x='1493.3' y='215.5' width='6' height='5.5' fill='#4aa8ff' fill-opacity='0.45' stroke='#4aa8ff' stroke-width='1.2'/><rect x='1514.8' y='215.5' width='6' height='5.5' fill='#4aa8ff' fill-opacity='0.45' stroke='#4aa8ff' stroke-width='1.2'/><rect x='1536.0' y='215.5' width='6' height='5.5' fill='#4aa8ff' fill-opacity='0.45' stroke='#4aa8ff' stroke-width='1.2'/><rect x='1626.5' y='215.5' width='6' height='5.5' fill='#4aa8ff' fill-opacity='0.45' stroke='#4aa8ff' stroke-width='1.2'/><rect x='1653.4' y='215.5' width='6' height='5.5' fill='#4aa8ff' fill-opacity='0.45' stroke='#4aa8ff' stroke-width='1.2'/><rect x='1680.0' y='215.5' width='6' height='5.5' fill='#4aa8ff' fill-opacity='0.45' stroke='#4aa8ff' stroke-width='1.2'/><text transform='translate(1493.0 130.0) rotate(-90)' font-family='Liberation Sans' font-size='5.5' font-weight='normal' fill='#7a0a82' textLength='26.0' lengthAdjust='spacingAndGlyphs'>clock_1h_cel</text><text transform='translate(1512.0 130.0) rotate(-90)' font-family='Liberation Sans' font-size='5.5' font-weight='normal' fill='#7a0a82' textLength='26.0' lengthAdjust='spacingAndGlyphs'>reset_cel_be</text><text transform='translate(1517.0 130.0) rotate(-90)' font-family='Liberation Sans' font-size='5.5' font-weight='normal' fill='#7a0a82' textLength='26.0' lengthAdjust='spacingAndGlyphs'>start_cel_be</text><text transform='translate(1522.0 130.0) rotate(-90)' font-family='Liberation Sans' font-size='5.5' font-weight='normal' fill='#7a0a82' textLength='26.0' lengthAdjust='spacingAndGlyphs'>stop</text><text transform='translate(1624.0 115.0) rotate(-90)' font-family='Liberation Sans' font-size='5.5' font-weight='normal' fill='#7a0a82' textLength='14.0' lengthAdjust='spacingAndGlyphs'>pin_re</text><text transform='translate(1642.0 130.0) rotate(-90)' font-family='Liberation Sans' font-size='5.5' font-weight='normal' fill='#7a0a82' textLength='28.0' lengthAdjust='spacingAndGlyphs'>cel_beep[2..0]</text><text transform='translate(1337.0 251.0) rotate(-90)' font-family='Liberation Sans' font-size='5.5' font-weight='normal' fill='#7a0a82' textLength='32.0' lengthAdjust='spacingAndGlyphs'>50M_clock_in</text><text transform='translate(1470.0 347.0) rotate(-90)' font-family='Liberation Sans' font-size='5.5' font-weight='normal' fill='#7a0a82' textLength='34.0' lengthAdjust='spacingAndGlyphs'>button_stop_in</text><rect x='1342.5' y='258.6' width='11.2' height='110.2' fill='none' stroke='#3aa6a6' stroke-width='0.9' stroke-dasharray='1.5 1'/><text transform='translate(1349.6 278.6) rotate(-90)' font-family='Liberation Sans' font-size='6.0' font-weight='bold' fill='#7a0a82' textLength='16.0' lengthAdjust='spacingAndGlyphs'>INPUT</text><text transform='translate(1352.6 281.6) rotate(-90)' font-family='Liberation Sans' font-size='6.0' font-weight='normal' fill='#3030d0' textLength='12.0' lengthAdjust='spacingAndGlyphs'>VCC</text><path d='M1345.3 308.6 L1345.3 292.6 L1348.1 288.6 L1350.9 292.6 L1350.9 308.6 Z' fill='#fff' stroke='#222' stroke-width='0.9'/><path d='M1348.1 280.6 L1348.1 288.6' stroke='#333' stroke-width='0.9'/><text transform='translate(1351.1 366.8) rotate(-90)' font-family='Liberation Sans' font-size='8.5' font-weight='normal' fill='#7a0a82' textLength='40.0' lengthAdjust='spacingAndGlyphs'>50M_clock</text><rect x='1353.9' y='368.8' width='10.8' height='37.9' fill='#fff' stroke='#222' stroke-width='1.4'/><rect x='1362.3' y='370.3' width='1.5' height='34.9' fill='#bbb'/><text transform='translate(1361.9 403.7) rotate(-90)' font-family='Liberation Sans' font-size='6.5' font-weight='bold' fill='#111' textLength='29.9' lengthAdjust='spacingAndGlyphs'>PIN_G21</text><rect x='1491.3' y='252.3' width='10.4' height='110.7' fill='none' stroke='#3aa6a6' stroke-width='0.9' stroke-dasharray='1.5 1'/><path d='M1496.5 221.0 L1496.5 256.3' stroke='#a84ab8' stroke-width='1.0'/><text transform='translate(1498.0 272.3) rotate(-90)' font-family='Liberation Sans' font-size='6.0' font-weight='bold' fill='#7a0a82' textLength='16.0' lengthAdjust='spacingAndGlyphs'>INPUT</text><text transform='translate(1501.0 275.3) rotate(-90)' font-family='Liberation Sans' font-size='6.0' font-weight='normal' fill='#3030d0' textLength='12.0' lengthAdjust='spacingAndGlyphs'>VCC</text><path d='M1493.7 302.3 L1493.7 286.3 L1496.5 282.3 L1499.3 286.3 L1499.3 302.3 Z' fill='#fff' stroke='#222' stroke-width='0.9'/><path d='M1496.5 274.3 L1496.5 282.3' stroke='#333' stroke-width='0.9'/><text transform='translate(1499.5 361.0) rotate(-90)' font-family='Liberation Sans' font-size='8.5' font-weight='normal' fill='#7a0a82' textLength='40.0' lengthAdjust='spacingAndGlyphs'>button_start</text><rect x='1501.9' y='363.0' width='10.0' height='32.9' fill='#fff' stroke='#222' stroke-width='1.4'/><rect x='1509.5' y='364.5' width='1.5' height='29.9' fill='#bbb'/><text transform='translate(1509.5 392.9) rotate(-90)' font-family='Liberation Sans' font-size='6.5' font-weight='bold' fill='#111' textLength='24.9' lengthAdjust='spacingAndGlyphs'>PIN_G3</text><rect x='1512.4' y='252.3' width='10.8' height='110.7' fill='none' stroke='#3aa6a6' stroke-width='0.9' stroke-dasharray='1.5 1'/><path d='M1517.8 221.0 L1517.8 256.3' stroke='#a84ab8' stroke-width='1.0'/><text transform='translate(1519.3 272.3) rotate(-90)' font-family='Liberation Sans' font-size='6.0' font-weight='bold' fill='#7a0a82' textLength='16.0' lengthAdjust='spacingAndGlyphs'>INPUT</text><text transform='translate(1522.3 275.3) rotate(-90)' font-family='Liberation Sans' font-size='6.0' font-weight='normal' fill='#3030d0' textLength='12.0' lengthAdjust='spacingAndGlyphs'>VCC</text><path d='M1515.0 302.3 L1515.0 286.3 L1517.8 282.3 L1520.6 286.3 L1520.6 302.3 Z' fill='#fff' stroke='#222' stroke-width='0.9'/><path d='M1517.8 274.3 L1517.8 282.3' stroke='#333' stroke-width='0.9'/><text transform='translate(1520.8 361.0) rotate(-90)' font-family='Liberation Sans' font-size='8.5' font-weight='normal' fill='#7a0a82' textLength='40.0' lengthAdjust='spacingAndGlyphs'>button_stop</text><rect x='1523.4' y='363.0' width='10.4' height='32.9' fill='#fff' stroke='#222' stroke-width='1.4'/><rect x='1531.4' y='364.5' width='1.5' height='29.9' fill='#bbb'/><text transform='translate(1531.2 392.9) rotate(-90)' font-family='Liberation Sans' font-size='6.5' font-weight='bold' fill='#111' textLength='24.9' lengthAdjust='spacingAndGlyphs'>PIN_F1</text><rect x='1533.6' y='252.3' width='10.8' height='110.7' fill='none' stroke='#3aa6a6' stroke-width='0.9' stroke-dasharray='1.5 1'/><path d='M1539.0 221.0 L1539.0 256.3' stroke='#a84ab8' stroke-width='1.0'/><text transform='translate(1540.5 272.3) rotate(-90)' font-family='Liberation Sans' font-size='6.0' font-weight='bold' fill='#7a0a82' textLength='16.0' lengthAdjust='spacingAndGlyphs'>INPUT</text><text transform='translate(1543.5 275.3) rotate(-90)' font-family='Liberation Sans' font-size='6.0' font-weight='normal' fill='#3030d0' textLength='12.0' lengthAdjust='spacingAndGlyphs'>VCC</text><path d='M1536.2 302.3 L1536.2 286.3 L1539.0 282.3 L1541.8 286.3 L1541.8 302.3 Z' fill='#fff' stroke='#222' stroke-width='0.9'/><path d='M1539.0 274.3 L1539.0 282.3' stroke='#333' stroke-width='0.9'/><text transform='translate(1542.0 361.0) rotate(-90)' font-family='Liberation Sans' font-size='8.5' font-weight='normal' fill='#7a0a82' textLength='40.0' lengthAdjust='spacingAndGlyphs'>button_reset</text><rect x='1544.6' y='363.0' width='10.4' height='32.9' fill='#fff' stroke='#222' stroke-width='1.4'/><rect x='1552.6' y='364.5' width='1.5' height='29.9' fill='#bbb'/><text transform='translate(1552.4 392.9) rotate(-90)' font-family='Liberation Sans' font-size='6.5' font-weight='bold' fill='#111' textLength='24.9' lengthAdjust='spacingAndGlyphs'>PIN_H2</text><rect x='1624.1' y='247.2' width='11.1' height='110.8' fill='none' stroke='#3aa6a6' stroke-width='0.9' stroke-dasharray='1.5 1'/><path d='M1629.7 221.0 L1629.7 251.2' stroke='#a84ab8' stroke-width='1.0'/><text transform='translate(1631.2 267.2) rotate(-90)' font-family='Liberation Sans' font-size='6.0' font-weight='bold' fill='#7a0a82' textLength='16.0' lengthAdjust='spacingAndGlyphs'>INPUT</text><text transform='translate(1634.2 270.2) rotate(-90)' font-family='Liberation Sans' font-size='6.0' font-weight='normal' fill='#3030d0' textLength='12.0' lengthAdjust='spacingAndGlyphs'>VCC</text><path d='M1626.9 297.2 L1626.9 281.2 L1629.7 277.2 L1632.5 281.2 L1632.5 297.2 Z' fill='#fff' stroke='#222' stroke-width='0.9'/><path d='M1629.7 269.2 L1629.7 277.2' stroke='#333' stroke-width='0.9'/><text transform='translate(1632.7 356.0) rotate(-90)' font-family='Liberation Sans' font-size='8.5' font-weight='normal' fill='#7a0a82' textLength='40.0' lengthAdjust='spacingAndGlyphs'>pin_time_K1</text><rect x='1635.4' y='358.0' width='10.7' height='32.0' fill='#fff' stroke='#222' stroke-width='1.4'/><rect x='1643.7' y='359.5' width='1.5' height='29.0' fill='#bbb'/><text transform='translate(1643.3 387.0) rotate(-90)' font-family='Liberation Sans' font-size='6.5' font-weight='bold' fill='#111' textLength='24.0' lengthAdjust='spacingAndGlyphs'>PIN_G6</text><rect x='1651.0' y='247.2' width='10.5' height='110.8' fill='none' stroke='#3aa6a6' stroke-width='0.9' stroke-dasharray='1.5 1'/><path d='M1656.2 221.0 L1656.2 251.2' stroke='#a84ab8' stroke-width='1.0'/><text transform='translate(1657.8 267.2) rotate(-90)' font-family='Liberation Sans' font-size='6.0' font-weight='bold' fill='#7a0a82' textLength='16.0' lengthAdjust='spacingAndGlyphs'>INPUT</text><text transform='translate(1660.8 270.2) rotate(-90)' font-family='Liberation Sans' font-size='6.0' font-weight='normal' fill='#3030d0' textLength='12.0' lengthAdjust='spacingAndGlyphs'>VCC</text><path d='M1653.5 297.2 L1653.5 281.2 L1656.2 277.2 L1659.0 281.2 L1659.0 297.2 Z' fill='#fff' stroke='#222' stroke-width='0.9'/><path d='M1656.2 269.2 L1656.2 277.2' stroke='#333' stroke-width='0.9'/><text transform='translate(1659.2 356.0) rotate(-90)' font-family='Liberation Sans' font-size='8.5' font-weight='normal' fill='#7a0a82' textLength='40.0' lengthAdjust='spacingAndGlyphs'>pin_alarm_K2</text><rect x='1661.7' y='358.0' width='10.1' height='32.0' fill='#fff' stroke='#222' stroke-width='1.4'/><rect x='1669.4' y='359.5' width='1.5' height='29.0' fill='#bbb'/><text transform='translate(1669.3 387.0) rotate(-90)' font-family='Liberation Sans' font-size='6.5' font-weight='bold' fill='#111' textLength='24.0' lengthAdjust='spacingAndGlyphs'>PIN_H5</text><rect x='1677.3' y='247.2' width='10.7' height='115.8' fill='none' stroke='#3aa6a6' stroke-width='0.9' stroke-dasharray='1.5 1'/><path d='M1682.7 221.0 L1682.7 251.2' stroke='#a84ab8' stroke-width='1.0'/><text transform='translate(1684.2 267.2) rotate(-90)' font-family='Liberation Sans' font-size='6.0' font-weight='bold' fill='#7a0a82' textLength='16.0' lengthAdjust='spacingAndGlyphs'>INPUT</text><text transform='translate(1687.2 270.2) rotate(-90)' font-family='Liberation Sans' font-size='6.0' font-weight='normal' fill='#3030d0' textLength='12.0' lengthAdjust='spacingAndGlyphs'>VCC</text><path d='M1679.9 297.2 L1679.9 281.2 L1682.7 277.2 L1685.5 281.2 L1685.5 297.2 Z' fill='#fff' stroke='#222' stroke-width='0.9'/><path d='M1682.7 269.2 L1682.7 277.2' stroke='#333' stroke-width='0.9'/><text transform='translate(1685.7 361.0) rotate(-90)' font-family='Liberation Sans' font-size='7.5' font-weight='normal' fill='#7a0a82' textLength='40.0' lengthAdjust='spacingAndGlyphs'>pin_stopwatch_k3</text><rect x='1688.2' y='363.0' width='10.3' height='33.0' fill='#fff' stroke='#222' stroke-width='1.4'/><rect x='1696.1' y='364.5' width='1.5' height='30.0' fill='#bbb'/><text transform='translate(1695.9 393.0) rotate(-90)' font-family='Liberation Sans' font-size='6.5' font-weight='bold' fill='#111' textLength='25.0' lengthAdjust='spacingAndGlyphs'>PIN_G4</text><rect x='1746.2' y='247.0' width='11.1' height='111.0' fill='none' stroke='#3aa6a6' stroke-width='0.9' stroke-dasharray='1.5 1'/><path d='M1751.8 221.0 L1751.8 251.0' stroke='#a84ab8' stroke-width='1.0'/><text transform='translate(1753.2 267.0) rotate(-90)' font-family='Liberation Sans' font-size='6.0' font-weight='bold' fill='#7a0a82' textLength='16.0' lengthAdjust='spacingAndGlyphs'>INPUT</text><text transform='translate(1756.2 270.0) rotate(-90)' font-family='Liberation Sans' font-size='6.0' font-weight='normal' fill='#3030d0' textLength='12.0' lengthAdjust='spacingAndGlyphs'>VCC</text><path d='M1749.0 297.0 L1749.0 281.0 L1751.8 277.0 L1754.5 281.0 L1754.5 297.0 Z' fill='#fff' stroke='#222' stroke-width='0.9'/><path d='M1751.8 269.0 L1751.8 277.0' stroke='#333' stroke-width='0.9'/><text transform='translate(1754.8 356.0) rotate(-90)' font-family='Liberation Sans' font-size='7.5' font-weight='normal' fill='#7a0a82' textLength='40.0' lengthAdjust='spacingAndGlyphs'>pin_switcher_k4</text><rect x='1757.5' y='358.0' width='10.7' height='32.0' fill='#fff' stroke='#222' stroke-width='1.4'/><rect x='1765.8' y='359.5' width='1.5' height='29.0' fill='#bbb'/><text transform='translate(1765.4 387.0) rotate(-90)' font-family='Liberation Sans' font-size='6.5' font-weight='bold' fill='#111' textLength='24.0' lengthAdjust='spacingAndGlyphs'>PIN_H6</text></svg>
<span class='tx' style='left:1218.34px;top:566.02px;font:normal 19.50px/1 "Liberation Sans",sans-serif;color:#111;transform:scaleX(0.9952);'>多功能数字钟</span>
<span class='tx' style='left:1550.15px;top:564.02px;font:normal 22.00px/1 "Liberation Sans",sans-serif;color:#111;transform:scaleX(0.8691);'>180201000XX XXX</span>
<div class='a' style='left:1218px;top:589px;width:622px;height:1.4px;background:#7a7a7a'></div>
<span class='tx' style='left:1260.62px;top:640.02px;font:normal 21.90px/1 "Liberation Serif",serif;color:#333;transform:scaleX(1.0518);'>从图 2 中可以看出，该数字钟有 8 个外部输入：时钟 50M_</span>
<span class='tx' style='left:1218.18px;top:673.02px;font:normal 21.90px/1 "Liberation Serif",serif;color:#333;transform:scaleX(1.0031);'>关（<i>K</i><sub>1</sub> 校时、<i>K</i><sub>2</sub> 闹钟、<i>K</i><sub>3</sub> 秒表、<i>K</i><sub>4</sub> 时/分选择）、3 个按键（<i>S</i>T</span>
<span class='tx' style='left:1218.19px;top:707.02px;font:normal 21.90px/1 "Liberation Serif",serif;color:#333;transform:scaleX(0.9965);'><i>RESET</i>）。有 30 个外部输出：4 个 7 段数码管输出、1 个音频输出</span>
<span class='tx' style='left:1216.83px;top:788.02px;font:bold 25.00px/1 "Liberation Serif",serif;color:#111;transform:scaleX(1.2496);'>3.3</span>
<span class='tx' style='left:1281.42px;top:789.02px;font:bold 26.00px/1 "Liberation Serif",serif;color:#111;transform:scaleX(1.0146);'>分模块原理框图</span>
<span class='tx' style='left:1261.61px;top:849.02px;font:normal 21.90px/1 "Liberation Serif",serif;color:#333;transform:scaleX(0.9807);'>从图 2 中我们已经能大致看出该系统的工作方案³为：</span>
<svg class='ov' width='1860' height='892'><rect x='1838.7' y='100' width='21.3' height='772' fill='#f0f0f0'/><rect x='1841' y='368.3' width='17' height='25.9' fill='#c1c1c1'/><path d='M1844.5 114 L1854.5 114 L1849.5 108.8 Z' fill='#505050'/><path d='M1845 857.5 L1855 857.5 L1850 862.8 Z' fill='#505050'/><rect x='1074' y='872.2' width='764.7' height='19.8' fill='#f0f0f0'/><rect x='1095' y='874.3' width='496' height='16.7' fill='#c1c1c1'/><path d='M1087.3 876.5 L1087.3 886.5 L1082 881.5 Z' fill='#a3a3a3'/><path d='M1825.5 876.5 L1825.5 886.5 L1830.8 881.5 Z' fill='#505050'/><rect x='1838.7' y='872.2' width='21.3' height='19.8' fill='#dcdcdc'/></svg>
</body></html>
